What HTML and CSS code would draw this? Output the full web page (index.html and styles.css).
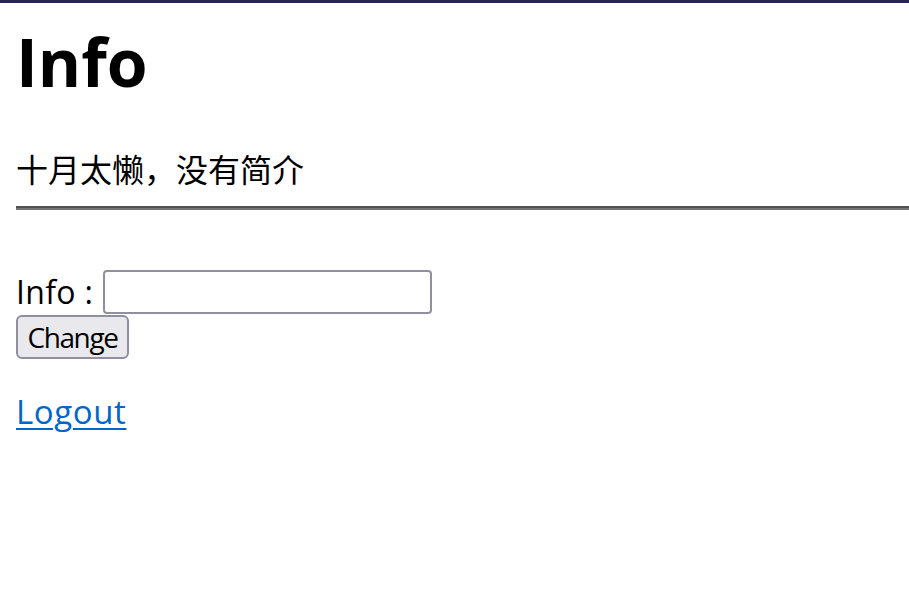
FILE: index.html
```html
<!DOCTYPE html>
<html lang="zh">
<head>
<meta charset="utf-8">
<title>Info</title>
<link rel="stylesheet" href="styles.css">
</head>
<body>
<div class="topbar"></div>
<main class="page">
  <h1 class="title">Info</h1>
  <p class="bio">十月太懒，没有简介</p>
  <hr class="rule">
  <form class="info-form">
    <div class="field">
      <label class="field-label" for="info">Info :</label>
      <input class="field-input" id="info" type="text">
    </div>
    <button class="btn" type="button">Change</button>
  </form>
  <a class="logout" href="#">Logout</a>
</main>
</body>
</html>
```

FILE: styles.css
```css
html, body {
  margin: 0;
  padding: 0;
  background: #ffffff;
}

body {
  font-family: "Open Sans", "Noto Sans CJK SC", sans-serif;
  color: #000000;
  overflow: hidden;
}

.topbar {
  height: 3px;
  background: #2a2456;
}

.page {
  padding-left: 16px;
}

.title {
  margin: 14px 0 0 0;
  font-size: 66px;
  line-height: 88px;
  font-weight: 700;
}

.bio {
  margin: 43px 0 0 0;
  font-size: 32px;
  line-height: 44px;
}

.rule {
  margin: 14px 0 0 0;
  height: 0;
  border: 0;
  border-top: 2px solid #505050;
  border-bottom: 2px solid #737373;
}

.info-form {
  margin-top: 60px;
}

.field {
  display: flex;
  align-items: center;
  height: 44px;
}

.field-label {
  font-size: 32px;
  line-height: 44px;
  letter-spacing: 0.3px;
}

.field-input {
  box-sizing: border-box;
  width: 329px;
  height: 44px;
  margin: 0 0 0 10px;
  border: 2px solid #8f8f9d;
  border-radius: 4px;
  background: #ffffff;
  font-size: 28px;
  padding: 0 6px;
}

.btn {
  display: block;
  box-sizing: border-box;
  margin-top: 1px;
  width: 113px;
  height: 44px;
  padding: 0;
  border: 2px solid #8f8f9d;
  border-radius: 6px;
  background: #e9e9ed;
  color: #000000;
  font-family: "Open Sans", sans-serif;
  font-size: 28px;
  letter-spacing: -1.4px;
  line-height: 40px;
}

.logout {
  display: inline-block;
  margin-top: 31px;
  font-size: 33px;
  letter-spacing: 0.6px;
  line-height: 44px;
  color: #0066cc;
  text-decoration: underline;
  text-decoration-thickness: 2px;
  text-underline-offset: 4px;
}
```
